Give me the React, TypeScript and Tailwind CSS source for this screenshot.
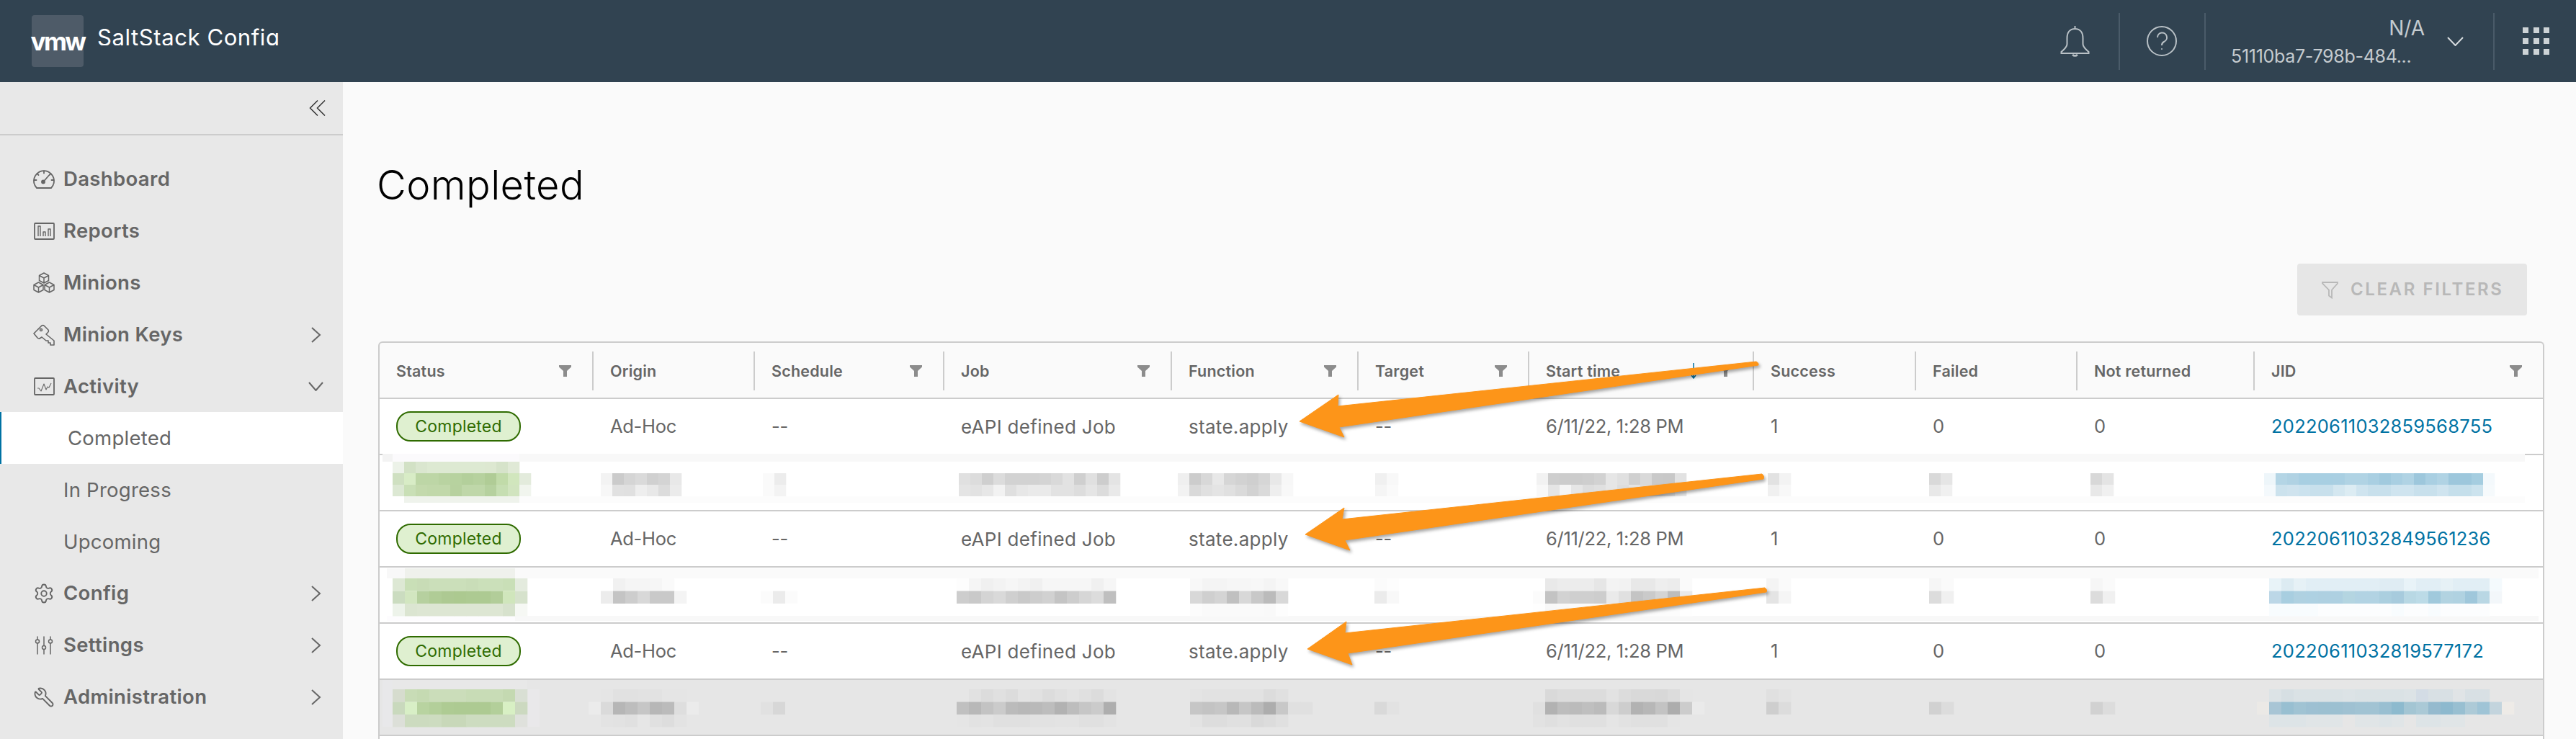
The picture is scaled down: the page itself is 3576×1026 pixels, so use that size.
import React from "react";
import { Settings, Wrench } from "lucide-react";

const hex = (s: string) => (s.length === 2 ? `#${s}${s}${s}` : `#${s}`);

type Strip = [number, number, string];
type Band = [number, number, number, number, string];

// pixelated rows: x in page coords, row index A/B/C, cell colours
const Mosaic = ({ top, cell, ys, h, strips, bands }: { top: number; cell: number; ys: number[]; h: number; strips: Strip[]; bands: Band[] }) => (
  <svg viewBox={`527 ${top} 3003 76`} className="relative block h-[76px] w-[3003px] overflow-visible">
    {bands.map(([x, y, w, bh, c], i) => (
      <rect key={`b${i}`} x={x} y={y} width={w} height={bh} fill={hex(c)} />
    ))}
    {strips.map(([x, r, cs]) =>
      cs.split(" ").map((c, i) => (
        <rect key={`${x}-${r}-${i}`} x={x + i * cell} y={ys[r]} width={cell + 0.3} height={h} fill={hex(c)} />
      ))
    )}
  </svg>
);

const row2: Strip[] = [
  [545, 0, "ecf2e8 d2e1c5 dae6cf dde9d2 dde9d2 dde9d2 dde9d2 dde9d2 dde8d1 d6e3ca e0e9d6"],
  [545, 1, "cfe0c1 d8ecc6 bdd6a6 bdd6a6 b9d3a1 b7d29f b3cf9b b6d19e b0cc96 c1dba9 d1e6bd e3ebdc"],
  [545, 2, "dce8d3 c9dfb6 c3d9ac c1d8aa c1d8aa b7d19f bfd7a9 bfd7a9 b6d19f c6deb2 d1e4bf f1f5ee"],
  [834, 1, "f3 cb d5 da d0 d4 e8"],
  [834, 2, "f7 e1 e0 ee e8 dc eb"],
  [1059, 1, "fa ec"],
  [1059, 2, "fa f3"],
  [1331, 1, "e0 dc cf dc d2 d2 d2 d4 d9 e2 cf e0 cd e4"],
  [1331, 2, "e4 e2 e7 f2 df e7 ea ea e2 e2 dd e5 dc e9"],
  [1635, 1, "ef cc d8 e8 d6 d2 cf d6 e8 f7"],
  [1635, 2, "f2 d9 e0 e4 e0 da d2 da ee f8"],
  [1909, 1, "f0 f8"],
  [1909, 2, "f5 fa"],
  [2133, 1, "f2 ce cc cc ce d2 e6 e0 d0 d9 c9 c8 e2"],
  [2133, 2, "f8 e5 f5 e6 dd e0 e6 dd e4 dd d9 dd e8"],
  [2454, 1, "e2 f3"],
  [2454, 2, "f0 f8"],
  [2678, 1, "d9 e5"],
  [2678, 2, "e8 f0"],
  [2902, 1, "d8 e4"],
  [2902, 2, "e8 f0"],
  [3143, 1, "eef6fa b4d5e5 b0d2e3 a8cfe2 a8cfe2 a8cfe2 a9cfe2 b0d3e4 b0d3e4 a9cfe2 a1cade a9cfe2 b0d3e4 9dc7dc a9cfe2 b0d3e4 9dc7dc 9dc7dc a5cde0 f4f9fc"],
  [3143, 2, "f4f9fc cce2ed cfe3ee cbe2ee c8e0ec c8e0ec d4e7f0 dcecf3 cfe4ef c8e0ec c8e0ec cfe4ef cfe4ef c8e0ec c8e0ec cfe4ef c5dfeb c5dfeb cce3ee f6fafc"],
];

const row4: Strip[] = [
  [545, 0, "dde8d4 c9dfb7 c8dcb6 cbdfba cbdfba cbdfba c9ddb8 cbe0ba cbe0ba c9dfb7 e4ebde"],
  [545, 1, "cbdcc0 d2e6c0 b6d09f b0cc96 adc992 acc990 adca92 adca92 b2cd99 d0e6bc d6e2cc"],
  [545, 2, "edf3ea dbe5d1 dde6d3 dde6d3 dde6d3 dde6d3 dde6d3 dde6d3 dde6d3 d7e2cd f6f8f4"],
  [851, 0, "f1 f5 f5 f6 fa"],
  [834, 1, "ec c4 cd d8 c9 c9 f4"],
  [1056, 1, "fb eb fb"],
  [1328, 0, "fd f5 f0 f3 f6 f3 f0 f6 f6 f6 f6 f0 f6"],
  [1328, 1, "cd c9 d4 d9 cf c9 cd d1 c4 cd d6 dc bf"],
  [1652, 0, "f8 f4 f4 f6 f6 f7 f4 f8"],
  [1652, 1, "d8 cf d4 c0 d8 c8 bb d8"],
  [1652, 2, "fc fa fa fa fa fa f9 fd"],
  [1908, 0, "fb fd"],
  [1908, 1, "eb f8"],
  [2128, 0, "ff e9 ec ec ec e6 f3 f2 e8 e8 ee ec fa"],
  [2128, 1, "fb c3 d2 cf cf cd ea e0 c4 ca d4 bd e9"],
  [2128, 2, "fe f8 f9 fb fb fb fa fa fb fc fc fc fe"],
  [2452, 0, "f4 fa"],
  [2452, 1, "e4 f5"],
  [2678, 0, "f6 fa"],
  [2678, 1, "dc f0"],
  [2902, 0, "f6 fa"],
  [2902, 1, "dc f0"],
  [3150, 0, "e8f3f8 dcebf2 e6f1f6 e1eef5 e1eef5 e1eef5 e1eef5 e1eef5 e1eef5 dfecf3 dfecf3 e8f3f8 e1eef5 e1eef5 e6f1f6 e1eef5 e1eef5 e1eef5 f4fafd"],
  [3150, 1, "bcd7e7 a8cee0 afd1e1 aed1e2 aed0e1 aed0e1 b4d5e1 b2d3e3 b2d3e3 abcfdf a7cbdd b8d8e4 bcdbe7 a0c9dc b2d3e1 b0d2e1 9fc7db b9d7e4 f3f7fa"],
  [3150, 2, "f8fcfe f8fcfe f8fcfe f8fcfe fcfdfe fcfdfe fcfdfe fcfdfe fcfdfe fcfdfe f8fcfe fcfdfe fcfdfe f8fcfe fcfdfe fcfdfe fcfdfe fcfdfe"],
];

const row6: Strip[] = [
  [545, 0, "d6dcce c8dcb6 c5dab2 cbddba cbddba cbddba c8dcb6 c8dcb6 c8dcb6 c4d9b1 d9dfd4"],
  [545, 1, "c9d9bd d8efc6 b8d3a0 b3cf9a aecb93 adca92 adca92 adca92 b3cf9a d8f0c4 ccd9c0"],
  [545, 2, "dcdfd8 ccdbbf ccdbbf cddcc0 c8d8b9 c8d8b9 cddcc0 cddcc0 cddcc0 cddcc0 dfe1dc"],
  [834, 0, "e5 e1 e1 e2 e2 e5 e5"],
  [817, 1, "eb da b6 bd c6 b7 bb de eb"],
  [834, 2, "e3 e2 e0 e6 e0 dd e3"],
  [1056, 1, "e1 d7 e6"],
  [1328, 0, "e6 e1 dc e0 dc e3 e1 dc e0 e3 e0 dc e3"],
  [1328, 1, "c0 b8 c3 cb bb b8 b9 bd b2 bd c6 cb ae"],
  [1328, 2, "e5 e2 e3 e0 e0 e0 e2 e2 e3 e3 e0 e0 e3"],
  [1652, 0, "e4 e2 e2 e2 e2 e2 dc e0"],
  [1652, 1, "c6 c3 c6 b8 c6 bb ad c8 e0 e0"],
  [1652, 2, "e3 dd dd e0 e0 d9 dc e0"],
  [1908, 1, "d9 e2"],
  [2128, 0, "e6 d9 dc dc dc dc e2 dc d9 d9 d8 dc e5"],
  [2128, 1, "e0 b2 bd bb bf bb d8 cd b2 b7 c3 ad cc ea"],
  [2128, 2, "e2 df e2 e0 e0 e0 e5 e2 e0 e0 e0 e5 e6"],
  [2452, 0, "e0 e3"],
  [2452, 1, "ce dc"],
  [2678, 1, "d1 dc"],
  [2902, 1, "d1 dc"],
  [3150, 0, "dce3e6 d6dfe3 dae2e5 dae2e5 dae2e5 dae2e5 dce3e6 dae2e5 dae2e5 dae2e5 dae2e5 dce3e6 d3dce5 d8e0e4 d8e0e4 e0e4e6 d8e0e4 d8e0e4"],
  [3133, 1, "ebe9e6 a8c5d5 98bfd1 a0c3d3 9dc0d2 9cc0d1 9cc0d1 9fc1d2 a1c3d3 a1c3d3 99bfd1 8dbace a3c5d3 aac9d6 95bace 8db9ce 98bfd1 adcad7 9fc4d6 c3d4dd eeebe7"],
  [3150, 2, "dde4e7 dde4e7 dde4e7 e0e5e7 e0e5e7 e0e5e7 e6e6e6 e0e5e7 e0e5e7 dde4e7 e0e5e7 e6e6e6 dde4e7 dde4e7 e0e5e7 e0e5e7 e6e6e6"],
];

const colClass = "grid grid-cols-[295px_224px_263px_316px_259px_237px_312px_225px_224px_246px_402px]";

const Funnel = () => (
  <svg viewBox="0 0 17 16" className="h-4 w-[17px] shrink-0">
    <path d="M0 0h17v2.5l-6 5.5v8h-5v-8l-6-5.5z" fill="#8c8c8c" />
  </svg>
);

const SortArrow = () => (
  <svg viewBox="0 0 8 22" className="mr-[32px] h-[22px] w-2 shrink-0" fill="none" stroke="#0072a3" strokeWidth="1.5">
    <path d="M4 0v21M1 17l3 4 3-4" />
  </svg>
);

const HeaderCell = ({ label, first, filter, sort }: { label: string; first?: boolean; filter?: boolean; sort?: boolean }) => (
  <div className="flex items-center">
    {!first && <span className="h-[54px] w-[2px] shrink-0 bg-[#cccccc]" />}
    <span className="pl-[23px] text-[21.5px] font-semibold tracking-[0.2px] text-[#666666]">{label}</span>
    <span className="ml-auto flex items-center pr-[29px]">
      {sort && <SortArrow />}
      {filter && <Funnel />}
    </span>
  </div>
);

const Badge = () => (
  <span className="flex h-[42px] w-[173px] items-center justify-center rounded-[20px] border-2 border-[#2f6b00] bg-[#dff0d0] text-[23px] tracking-[0.2px] text-[#2f6b00]">
    Completed
  </span>
);

const DataRow = ({ jid }: { jid: string }) => {
  const cell = "pl-[25px] text-[25.5px] text-[#666666] tracking-[-0.3px]";
  const wide = "pl-[25px] text-[26px] text-[#666666] tracking-[0.3px]";
  return (
    <div className={`${colClass} h-[78px] items-center border-b-2 border-[#cccccc] bg-white`}>
      <div className="pl-[23px]"><Badge /></div>
      <div className={cell}>Ad-Hoc</div>
      <div className={cell}>--</div>
      <div className={wide}>eAPI defined Job</div>
      <div className={wide}>state.apply</div>
      <div className={cell}>--</div>
      <div className={cell}>6/11/22, 1:28 PM</div>
      <div className={cell}>1</div>
      <div className={cell}>0</div>
      <div className={cell}>0</div>
      <div className="pl-[25px] text-[25.5px] tracking-[0.25px] text-[#0072a3]">{jid}</div>
    </div>
  );
};

const strokeIcon = { fill: "none", stroke: "#666666", strokeWidth: 1.8, strokeLinejoin: "round" as const, strokeLinecap: "round" as const };

const cube = (cx: number, cy: number) =>
  `M${cx} ${cy - 7}l6.5 3.5v7l-6.5 3.5l-6.5-3.5v-7zM${cx - 6.5} ${cy - 3.5}l6.5 3.5l6.5-3.5M${cx} ${cy}v7`;

const icons: Record<string, React.ReactNode> = {
  dashboard: (
    <svg viewBox="0 0 30 26" className="h-[26px] w-[30px]" {...strokeIcon}>
      <path d="M5 25h20a14 14 0 1 0-20 0z" />
      <path d="M15 1.5v3M1.5 14h3M25.5 14h3M5.5 5l2 2M24.5 5l-2 2M14.5 16l7-8" />
      <circle cx="14" cy="16.5" r="2" fill="#666666" />
    </svg>
  ),
  reports: (
    <svg viewBox="0 0 29 24" className="h-6 w-[29px]" {...strokeIcon} strokeLinecap="butt">
      <rect x="1" y="1" width="27" height="22" rx="1" />
      <path d="M6 19V5h3v14M13 19v-6h3v6M20 19V9h3v10" strokeWidth="1.4" />
    </svg>
  ),
  minions: (
    <svg viewBox="0 0 30 30" className="h-[30px] w-[30px]" {...strokeIcon} strokeWidth="1.5">
      <path d={cube(15, 8)} />
      <path d={cube(7.5, 21)} />
      <path d={cube(22.5, 21)} />
    </svg>
  ),
  keys: (
    <svg viewBox="0 0 30 30" className="h-[30px] w-[30px]" {...strokeIcon} strokeWidth="1.6">
      <path d="M1 13 L12 2 Q14 1 15.5 2.5 L21 8 Q22 10 20.5 11.5 L18 14 L29 23 V29 H24 V26 H21 V23 H18 L12 18 L9 20 Q7.500 20.500 6 19 Z" />
      <circle cx="11" cy="8" r="1.500" />
    </svg>
  ),
  activity: (
    <svg viewBox="0 0 29 25" className="h-[25px] w-[29px]" {...strokeIcon} strokeLinecap="butt">
      <rect x="1" y="1" width="27" height="23" rx="1" />
      <path d="M5 15h2l3 4 4-10 3 8 2-4 2 1 3-6" strokeWidth="1.1" />
    </svg>
  ),
  config: <Settings size={30} strokeWidth={1.5} color="#666666" />,
  settings: (
    <svg viewBox="0 0 26 26" className="h-[26px] w-[26px]" {...strokeIcon} strokeWidth="1.5">
      <path d="M4 1v4M4 10v15M13 1v12M13 19v6M22 1v4M22 10v15" />
      <circle cx="4" cy="7.500" r="2.500" />
      <circle cx="13" cy="16" r="2.500" />
      <circle cx="22" cy="7.500" r="2.500" />
    </svg>
  ),
  admin: <Wrench size={30} strokeWidth={1.5} color="#666666" className="-scale-x-100" />,
};

const ChevRight = () => (
  <svg viewBox="0 0 15 22" className="h-[22px] w-[15px]" fill="none" stroke="#666666" strokeWidth="2">
    <path d="M2 1l11 10L2 21" />
  </svg>
);

const ChevDown = () => (
  <svg viewBox="0 0 21 13" className="h-[13px] w-[21px]" fill="none" stroke="#666666" strokeWidth="2">
    <path d="M1 1l9.500 11L20 1" />
  </svg>
);

const NavItem = ({ icon, label, chev }: { icon: string; label: string; chev?: "right" | "down" }) => (
  <div className="flex h-[71.9px] items-center pl-[46px] pr-[27px]">
    <span className="flex w-[30px] shrink-0 items-center justify-center">{icons[icon]}</span>
    <span className="ml-[12px] text-[27.5px] font-semibold tracking-[0.35px] text-[#666666]">{label}</span>
    <span className="ml-auto flex w-[22px] justify-center">
      {chev === "right" && <ChevRight />}
      {chev === "down" && <ChevDown />}
    </span>
  </div>
);

const SubItem = ({ label, active }: { label: string; active?: boolean }) =>
  active ? (
    <div className="flex h-[71.9px] items-center border-l-2 border-[#0072a3] bg-white pl-[92px] text-[27.5px] tracking-[0.25px] text-[#666666]">{label}</div>
  ) : (
    <div className="flex h-[71.9px] items-center pl-[88px] text-[27.5px] tracking-[0.25px] text-[#666666]">{label}</div>
  );

const Arrow = ({ d }: { d: string }) => <path d={d} fill="#fd9519" stroke="#fd9519" strokeWidth="1" strokeLinejoin="round" />;

export default function App() {
  return (
    <div className="relative flex h-[1026px] w-[3576px] flex-col overflow-hidden bg-[#fafafa] font-[Inter,sans-serif]">
      {/* top bar */}
      <header className="flex h-[114px] shrink-0 items-center bg-[#314351] pl-[44px] pr-[37px]">
        <div className="flex h-[72px] w-[72px] items-center justify-center rounded-[4px] bg-[#4e5b68] text-[35px] font-bold tracking-[-2.5px] text-white">
          vmw
        </div>
        <div className="ml-[19px] mt-[-15px] h-[27px] overflow-hidden text-[31px] leading-[32px] tracking-[0.6px] text-white">SaltStack Config</div>
        <div className="ml-auto flex items-center">
          <svg viewBox="0 0 41 44" className="h-[44px] w-[41px]" fill="none" stroke="#b9c1c6" strokeWidth="2">
            <path d="M20.500 5c-7 0-11 5-11 13v8c0 5-4 7-8 11v2h38v-2c-4-4-8-6-8-11v-8c0-8-4-13-11-13zM20.500 1v4" />
            <path d="M17 41q3.500 3 7 0" strokeWidth="2.500" />
          </svg>
          <span className="ml-[40px] h-[79px] w-[2px] bg-[#4a5b69]" />
          <svg viewBox="0 0 42 44" className="ml-[37px] h-[44px] w-[42px]" fill="none" stroke="#b9c1c6" strokeWidth="2">
            <circle cx="21" cy="22" r="20" />
            <path d="M15 17a6.500 6.500 0 1 1 9 6c-2 1-3 2-3 5" />
            <circle cx="21" cy="33" r="1" fill="#b9c1c6" stroke="none" />
          </svg>
          <span className="ml-[38px] h-[79px] w-[2px] bg-[#4a5b69]" />
          <div className="ml-[35px] flex w-[269px] flex-col items-end text-[#c5cbcf]">
            <span className="text-[28px] leading-[34px]">N/A</span>
            <span className="mt-[7px] self-start text-[25px] leading-[30px] tracking-[-0.3px]">51110ba7-798b-484...</span>
          </div>
          <svg viewBox="0 0 23 13" className="ml-[31px] h-[13px] w-[23px]" fill="none" stroke="#d5dadd" strokeWidth="2">
            <path d="M1 1l10.500 11L22 1" />
          </svg>
          <span className="ml-[41px] h-[79px] w-[2px] bg-[#4a5b69]" />
          <div className="ml-[39px] grid grid-cols-3 gap-x-[6.500px] gap-y-[7px]">
            {Array.from({ length: 9 }).map((_, i) => (
              <span key={i} className="h-2 w-2 bg-[#cdd3d6]" />
            ))}
          </div>
        </div>
      </header>

      <div className="flex min-h-0 flex-1">
        {/* left nav */}
        <aside className="w-[476px] shrink-0 bg-[#e8e8e8]">
          <div className="flex h-[74px] items-center justify-end border-b-2 border-[#cccccc] pr-[24px]">
            <svg viewBox="0 0 23 22" className="h-[22px] w-[23px]" fill="none" stroke="#333333" strokeWidth="1.5">
              <path d="M12 0.500L1.500 11L12 21.500M22 0.500L11.500 11L22 21.500" />
            </svg>
          </div>
          <nav className="pt-[25px]">
            <NavItem icon="dashboard" label="Dashboard" />
            <NavItem icon="reports" label="Reports" />
            <NavItem icon="minions" label="Minions" />
            <NavItem icon="keys" label="Minion Keys" chev="right" />
            <NavItem icon="activity" label="Activity" chev="down" />
            <SubItem label="Completed" active />
            <SubItem label="In Progress" />
            <SubItem label="Upcoming" />
            <NavItem icon="config" label="Config" chev="right" />
            <NavItem icon="settings" label="Settings" chev="right" />
            <NavItem icon="admin" label="Administration" chev="right" />
          </nav>
        </aside>

        {/* main */}
        <main className="flex min-w-0 flex-1 flex-col pl-[49px] pr-[44px] pt-[113px]">
          <h1 className="-ml-[2px] shrink-0 text-[56px] font-light leading-[60px] tracking-[0.4px] text-black">Completed</h1>
          <button className="mr-[24px] mt-[79px] flex h-[72px] w-[319px] shrink-0 items-center self-end rounded-[4px] bg-[#e6e6e6] pl-[33px] text-[24px] font-semibold tracking-[2.6px] text-[#b8b8b8]">
            <svg viewBox="0 0 25 25" className="mr-[16px] h-[25px] w-[25px] shrink-0" fill="none" stroke="#b8b8b8" strokeWidth="1.800">
              <path d="M2 2h21v1.500l-8 9v11l-4-3v-8l-9-9z" />
            </svg>
            CLEAR FILTERS
          </button>
          <div className="mt-[36px] w-[3007px] shrink-0 rounded-t-[6px] border-x-2 border-t-2 border-[#cccccc]">
            <div className={`${colClass} h-[78px] border-b-2 border-[#cccccc] py-[12px]`}>
              <HeaderCell label="Status" first filter />
              <HeaderCell label="Origin" />
              <HeaderCell label="Schedule" filter />
              <HeaderCell label="Job" filter />
              <HeaderCell label="Function" filter />
              <HeaderCell label="Target" filter />
              <HeaderCell label="Start time" filter sort />
              <HeaderCell label="Success" />
              <HeaderCell label="Failed" />
              <HeaderCell label="Not returned" />
              <HeaderCell label="JID" filter />
            </div>
            <DataRow jid="20220611032859568755" />
            <div className="h-[78px] border-b-2 border-[#cccccc] bg-white">
              <Mosaic
                top={632}
                cell={16}
                ys={[641, 657, 673]}
                h={16}
                strips={row2}
                bands={[
                  [531, 630, 14, 11, "f3"],
                  [545, 630, 176, 11, "fbfafc"],
                  [721, 630, 2784, 11, "f8"],
                  [561, 689, 160, 9, "eff3ec"],
                  [721, 689, 2784, 9, "fc"],
                ]}
              />
            </div>
            <DataRow jid="20220611032849561236" />
            <div className="h-[78px] border-b-2 border-[#cccccc] bg-white">
              <Mosaic
                top={788}
                cell={17}
                ys={[803, 820.500, 838]}
                h={17.500}
                strips={row4}
                bands={[
                  [537, 789, 25, 14, "f8"],
                  [562, 789, 153, 14, "eff1ec"],
                  [715, 789, 2809, 14, "fa"],
                  [537, 855, 178, 7, "fdfcfe"],
                  [715, 855, 2809, 7, "f8"],
                ]}
              />
            </div>
            <DataRow jid="20220611032819577172" />
            <div className="h-[78px] border-b-2 border-[#cccccc] bg-[#e6e6e6]">
              <Mosaic
                top={944}
                cell={17}
                ys={[957, 974.500, 992]}
                h={17.500}
                strips={row6}
                bands={[
                  [531, 944, 14, 65, "e8e8ea"],
                  [545, 944, 187, 13, "e8e8e8"],
                  [732, 957, 17, 52, "e9e8ea"],
                ]}
              />
            </div>
            <div className="h-[78px] bg-white" />
          </div>
        </main>
      </div>

      {/* annotation arrows */}
      <svg viewBox="0 0 3576 1026" className="pointer-events-none absolute left-0 top-0 h-[1026px] w-[3576px] drop-shadow-[2px_3px_2px_rgba(0,0,0,0.35)]">
        <Arrow d="M1804 585L1858 548L1857 564L2438 502Q2442 504 2441 507L1859 593L1866 607Z" />
        <Arrow d="M1812 742L1866 705L1863 721L2446 658Q2450 661 2448 665L1867 750L1874 764Z" />
        <Arrow d="M1815 901L1869 863L1867 879L2450 816Q2454 819 2452 822L1871 907L1877 923Z" />
      </svg>
    </div>
  );
}
